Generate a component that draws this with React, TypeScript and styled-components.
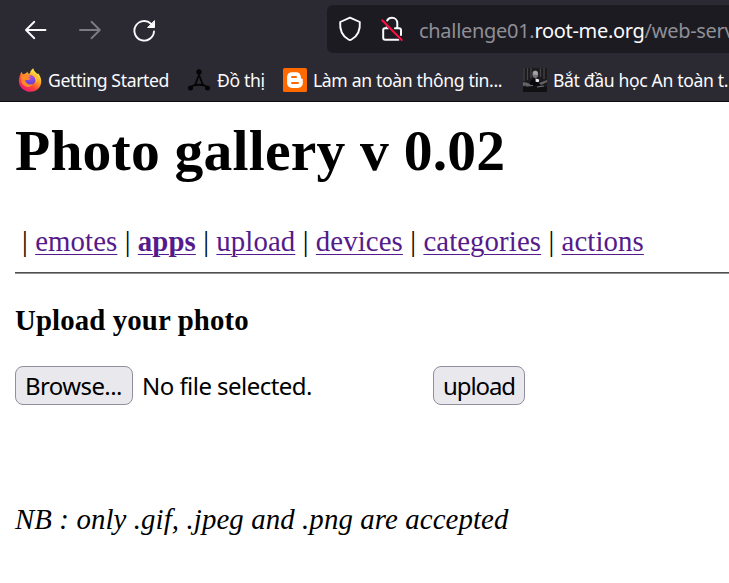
import React from "react";
import styled, { createGlobalStyle } from "styled-components";

const GlobalStyle = createGlobalStyle`
  * { box-sizing: border-box; }
  html, body { margin: 0; padding: 0; background: #fff; overflow: hidden; }
`;

const Window = styled.div`
  width: 729px;
  height: 583px;
  overflow: hidden;
  background: #fff;
  color: #000;
`;

const Chrome = styled.header`
  height: 102px;
  background: #2b2a33;
  border-bottom: 1px solid #0c0c0d;
  overflow: hidden;
  font-family: "Noto Sans", "Open Sans", sans-serif;
`;

const NavBar = styled.div`
  display: flex;
  align-items: center;
  height: 53px;
  padding: 5px 0 0 23px;
`;

const NavButton = styled.button<{ $dim?: boolean }>`
  display: flex;
  flex: none;
  width: 26px;
  height: 26px;
  margin: 2px 28px 0 0;
  padding: 0;
  border: 0;
  background: none;
  color: ${(p) => (p.$dim ? "#7c7b81" : "#fbfbfe")};
`;

const AddressBar = styled.div`
  display: flex;
  flex: none;
  align-items: center;
  width: 440px;
  height: 48px;
  margin-left: 142px;
  padding-left: 10px;
  border-radius: 6px;
  background: #1c1b22;
`;

const AddressIcon = styled.span<{ $gap: number }>`
  display: flex;
  flex: none;
  width: 26px;
  height: 28px;
  margin-right: ${(p) => p.$gap}px;
`;

const Url = styled.span`
  padding-top: 3px;
  color: #8f8f96;
  font-size: 20px;
  line-height: 28px;
  letter-spacing: -0.3px;
  white-space: nowrap;
  b { font-weight: 400; color: #fbfbfe; }
`;

const Bookmarks = styled.nav`
  display: flex;
  align-items: center;
  height: 48px;
  padding: 6px 0 0 18px;
`;

const Bookmark = styled.a<{ $width: number }>`
  display: flex;
  flex: none;
  align-items: center;
  gap: 6px;
  width: ${(p) => p.$width}px;
  color: #fbfbfe;
  font-size: 17.6px;
  line-height: 26px;
  letter-spacing: -0.36px;
  white-space: nowrap;
  svg { flex: none; }
`;

const Page = styled.main`
  padding: 16px 0 0 15px;
  font-family: "Liberation Serif", "Times New Roman", serif;
  font-size: 28.8px;
`;

const Title = styled.h1`
  margin: 0;
  font-size: 57.6px;
  line-height: 66px;
  letter-spacing: 0.2px;
  white-space: nowrap;
`;

const Links = styled.nav`
  margin-top: 41px;
  padding-left: 7px;
  line-height: 32px;
  letter-spacing: 0.1px;
  white-space: nowrap;
`;

const PageLink = styled.a<{ $current?: boolean }>`
  color: #551a8b;
  font-weight: ${(p) => (p.$current ? 700 : 400)};
  text-decoration: underline;
  text-decoration-thickness: 1px;
  text-underline-offset: 3px;
`;

const Rule = styled.hr`
  height: 2px;
  margin: 15px 0 0;
  border: 0;
  border-top: 1px solid #505050;
  background: #8f8f8f;
`;

const Heading = styled.h3`
  margin: 30px 0 0;
  font-size: 28.8px;
  line-height: 32px;
  letter-spacing: 0.13px;
`;

const Form = styled.form`
  display: flex;
  align-items: center;
  margin-top: 30px;
  font-family: "Noto Sans", "Open Sans", sans-serif;
  font-size: 24px;
`;

const FormButton = styled.button<{ $width: number; $spacing: number }>`
  flex: none;
  width: ${(p) => p.$width}px;
  height: 39px;
  padding: 0 0 0 9px;
  border: 1px solid #8f8f9d;
  border-radius: 8px;
  background: #e9e9ed;
  color: #000;
  font: inherit;
  line-height: 37px;
  letter-spacing: ${(p) => p.$spacing}px;
  text-align: left;
  white-space: nowrap;
`;

const FileName = styled.span`
  width: 291px;
  margin-left: 9px;
  line-height: 37px;
  letter-spacing: -0.54px;
  white-space: nowrap;
`;

const Note = styled.p`
  margin: 98px 0 0;
  font-style: italic;
  line-height: 32px;
  letter-spacing: 0.12px;
  white-space: nowrap;
`;

const Arrow = ({ forward }: { forward?: boolean }) => (
  <svg width="26" height="26" viewBox="0 0 26 26" fill="none" stroke="currentColor" strokeWidth="1.9" strokeLinecap="round" strokeLinejoin="round">
    {forward ? <path d="M3 13H22.500M14.500 4.800 22.800 13l-8.300 8.200" /> : <path d="M22.500 13H3.500M11.300 4.800 3 13l8.300 8.200" />}
  </svg>
);

const Reload = () => (
  <svg width="26" height="26" viewBox="0 0 26 26" fill="none" stroke="currentColor" strokeWidth="1.9" strokeLinecap="round">
    <path d="M23 14.500A9.800 9.800 0 1 1 20 6.700L21.500 8" />
    <path d="M23.500 4v6.500h-6.500Z" fill="currentColor" strokeWidth="1" strokeLinejoin="round" />
  </svg>
);

const Shield = () => (
  <svg width="26" height="28" viewBox="0 0 26 28" fill="none" stroke="#fbfbfe" strokeWidth="1.9" strokeLinejoin="round">
    <path d="M13 2.700 22.800 7c.6 7.500-1.800 14-8.300 17.500q-1.500.9-3 0C5 21 2.600 14.500 3.200 7Z" />
  </svg>
);

const InsecureLock = () => (
  <svg width="26" height="28" viewBox="0 0 26 28" fill="none" strokeLinecap="round" strokeLinejoin="round">
    <path d="M8.200 5.500C9.200 3.700 10.800 2.800 13 2.800c3.200 0 5.300 2.300 5.300 5.300v4.700M7.800 10.500V13M9.500 13.300H6Q4.200 13.300 4.200 15V22.800q0 2 2 2H19.500M16 13.300H20q2 0 2 2V20" stroke="#fbfbfe" strokeWidth="2" />
    <path d="M3.200 5.200 22.700 25" stroke="#1c1b22" strokeWidth="2.800" />
    <path d="M3.200 5.200 22.700 25" stroke="#ff0f43" strokeWidth="2" />
  </svg>
);

const Firefox = () => (
  <svg width="24" height="24" viewBox="0 0 24 24">
    <defs>
      <linearGradient id="flame" x1="0.85" y1="0.05" x2="0.25" y2="0.95">
        <stop offset="0.1" stopColor="#fff04a" />
        <stop offset="0.42" stopColor="#ff9a25" />
        <stop offset="0.7" stopColor="#ff4435" />
        <stop offset="1" stopColor="#e61c78" />
      </linearGradient>
      <radialGradient id="globe" cx="0.6" cy="0.2" r="0.9">
        <stop offset="0" stopColor="#a74bf3" />
        <stop offset="1" stopColor="#513fbb" />
      </radialGradient>
    </defs>
    <path d="M3.300 3.800 5 6.200l2-.4 2.700-2L9.800 5.500 12 5.600C12 3 13.700 1.300 15.300.2c.3 3 2.900 4.200 4.200 5.800l.8-.5c2.500 3.300 3.500 7 2.800 10.100C22 20.700 17.800 23.800 12.500 23.800 6.300 23.800.8 19 .8 12.700.8 9 2.300 7.200 3.300 3.800Z" fill="url(#flame)" />
    <circle cx="11.900" cy="12.200" r="5.400" fill="url(#globe)" />
    <path d="M3 8.500c1.600-2.400 5-2.600 7-1.200l3 .1c-.2 1.800-2.700 1.900-3.400 3 1.500-.4 2.400-.2 3.200.2-.6.8-1.400 1.300-2.500 1.500-1.500.2-2.600-.1-3.200-.6.5 4.600 5 6.400 8.200 4-1.800 3.600-6 4.300-9 2.300S2.600 12.500 3 8.500Z" fill="#ff8a2a" />
    <path d="M14 7.300c3 1 5.300 4 3.700 7.200 3-3 2.200-6.700.3-8.600Z" fill="#ffbd36" />
  </svg>
);

const Graph = () => (
  <svg width="24" height="24" viewBox="0 0 24 24" fill="none" stroke="#050505" strokeWidth="1.800">
    <path d="M12 5v3.500M11.500 8 8.300 16.500 4 19M12.500 8l3.200 8.500L20 19M6.500 17.500q5.500-1.500 11 0" />
    <g fill="#050505" stroke="none">
      <circle cx="12" cy="4" r="2.700" />
      <circle cx="3.500" cy="20" r="2.500" />
      <circle cx="20.500" cy="20" r="2.500" />
    </g>
  </svg>
);

const Blogger = () => (
  <svg width="24" height="24" viewBox="0 0 24 24">
    <rect width="24" height="24" rx="1.500" fill="#ff6a00" />
    <path d="M9 4.300h4.200c2.700 0 4.600 2 4.600 4.400 0 1.300.3 1.700 1 1.900.7.200 1 .6 1 1.400v3c0 2.900-2 4.900-4.900 4.900H9c-2.900 0-4.900-2-4.900-4.900V9.200c0-2.900 2-4.900 4.900-4.900Z" fill="#fff" />
    <path d="M9 9h4M9 15.100h6" stroke="#ff6a00" strokeWidth="2" strokeLinecap="round" />
  </svg>
);

const Portrait = () => (
  <svg width="24" height="24" viewBox="0 0 24 24">
    <rect width="24" height="24" fill="#1b1a1c" />
    <path d="M1 0v13M4.500 0v12M8 0v10M17.500 0v9M21 0v11" stroke="#454347" strokeWidth="1.300" />
    <path d="m7 14 4-4 4 2 3 4-4 3-7-1Z" fill="#08080a" />
    <ellipse cx="12.300" cy="6.200" rx="2.900" ry="3.700" fill="#77747a" />
    <path d="M10 4q2-2 4.600 0v3q-2-1-4 0Z" fill="#a8a5aa" />
    <path d="m12.500 10.500 3.700 1-.5 2.700-3-.5Z" fill="#eeeaf0" />
    <path d="m0 14 5 1 3 2-8 1ZM16 15l8-3v2l-6 3Z" fill="#656268" />
    <path d="m0 19 12-2 12 2v5H0Z" fill="#111013" />
    <path d="m3 18 7-.5M14 19l7-1" stroke="#77747a" />
  </svg>
);

const bookmarks = [
  { label: "Getting Started", icon: <Firefox />, width: 169 },
  { label: "Đồ thị", icon: <Graph />, width: 96 },
  { label: "Làm an toàn thông tin...", icon: <Blogger />, width: 240 },
  { label: "Bắt đầu học An toàn t.", icon: <Portrait />, width: 206 },
];

const albums = ["emotes", "apps", "upload", "devices", "categories", "actions"];

export default function App() {
  return (
    <Window>
      <GlobalStyle />
      <Chrome>
        <NavBar>
          <NavButton aria-label="Back"><Arrow /></NavButton>
          <NavButton aria-label="Forward" $dim><Arrow forward /></NavButton>
          <NavButton aria-label="Reload"><Reload /></NavButton>
          <AddressBar>
            <AddressIcon $gap={16}><Shield /></AddressIcon>
            <AddressIcon $gap={14}><InsecureLock /></AddressIcon>
            <Url>challenge01.<b>root-me.org</b>/web-serv</Url>
          </AddressBar>
        </NavBar>
        <Bookmarks>
          {bookmarks.map((b) => (
            <Bookmark key={b.label} $width={b.width}>
              {b.icon}
              <span>{b.label}</span>
            </Bookmark>
          ))}
        </Bookmarks>
      </Chrome>
      <Page>
        <Title>Photo gallery v 0.02</Title>
        <Links>
          {albums.map((name) => (
            <React.Fragment key={name}>
              {"| "}
              <PageLink href="#" $current={name === "apps"}>{name}</PageLink>{" "}
            </React.Fragment>
          ))}
        </Links>
        <Rule />
        <Heading>Upload your photo</Heading>
        <Form>
          <FormButton type="button" $width={118} $spacing={-0.6}>Browse...</FormButton>
          <FileName>No file selected.</FileName>
          <FormButton type="button" $width={92} $spacing={-1.1}>upload</FormButton>
        </Form>
        <Note>NB : only .gif, .jpeg and .png are accepted</Note>
      </Page>
    </Window>
  );
}
